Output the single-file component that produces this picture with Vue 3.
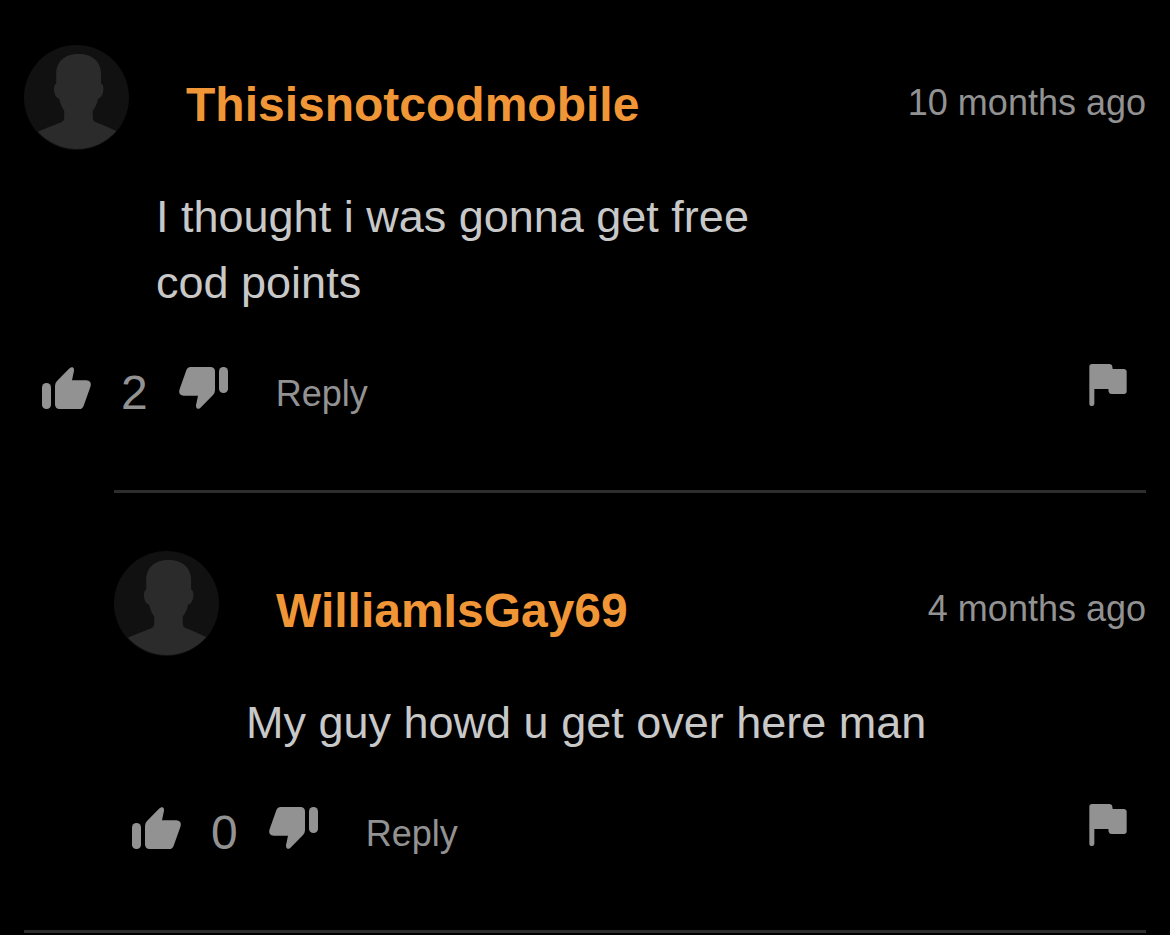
<template>
  <main class="comments">
    <article
      v-for="comment in comments"
      :key="comment.id"
      class="comment"
      :class="{ 'comment-reply': comment.isReply }"
    >
      <header class="comment-head">
        <svg class="avatar" viewBox="0 0 316 316" aria-hidden="true">
          <circle cx="158" cy="158" r="158" fill="#111111" />
          <path
            fill="#2b2b2b"
            d="M42 261 C67 249 98 239 116 230 Q121 227 121 220 V197 C113 187 109 176 106 162 C96 159 90 147 90 132 Q90 120 97 116 V88 C97 48 124 27 164 27 C204 27 232 48 232 88 V116 Q240 120 239 132 C239 147 233 159 223 162 C220 176 216 187 207 197 V220 Q207 227 212 230 C232 239 260 249 278 259 A158 158 0 0 1 42 261 Z"
          />
        </svg>
        <h2 class="author">{{ comment.author }}</h2>
        <time class="date">{{ comment.date }}</time>
      </header>
      <p class="text">{{ comment.text }}</p>
      <div class="actions">
        <button class="vote" type="button" aria-label="Like">
          <svg viewBox="0 0 147 126">
            <rect x="0" y="48" width="27" height="78" rx="13" />
            <path
              d="M39 56 Q39 48 45 42 L81 5 Q86 -1 92 1 Q97 4 96 11 L90 40 H133 Q151 42 145 60 L125 116 Q121 126 112 126 H53 Q39 126 39 112 Z"
            />
          </svg>
        </button>
        <span class="count">{{ comment.votes }}</span>
        <button class="vote" type="button" aria-label="Dislike">
          <svg viewBox="0 0 147 126">
            <rect x="120" y="0" width="27" height="78" rx="13" />
            <path
              d="M108 70 Q108 78 102 84 L66 121 Q61 127 55 125 Q50 122 51 115 L57 86 H14 Q-4 84 2 66 L22 10 Q26 0 35 0 H94 Q108 0 108 14 Z"
            />
          </svg>
        </button>
        <button class="reply" type="button">Reply</button>
        <button class="flag" type="button" aria-label="Report">
          <svg viewBox="0 0 112 126">
            <path
              d="M8 0 H60 Q68 0 69 8 L70 15 H103 Q112 15 112 24 V82 Q112 90 104 90 H67 Q59 90 58 83 L57 75 H15 V119 Q15 126 8 126 Q0 126 0 119 V8 Q0 0 8 0 Z"
            />
          </svg>
        </button>
      </div>
    </article>
  </main>
</template>

<script setup>
import { ref } from "vue";

const comments = ref([
  {
    id: 1,
    author: "Thisisnotcodmobile",
    date: "10 months ago",
    text: "I thought i was gonna get free\ncod points",
    votes: 2,
    isReply: false,
  },
  {
    id: 2,
    author: "WilliamIsGay69",
    date: "4 months ago",
    text: "My guy howd u get over here man",
    votes: 0,
    isReply: true,
  },
]);
</script>

<style>
body {
  margin: 0;
  background: #000000;
}
</style>

<style scoped>
.comments {
  padding: 45px 24px 0;
  font-family: "Liberation Sans", Arial, sans-serif;
  color: #929293;
}

.comments::after {
  content: "";
  display: block;
  height: 3px;
  background: #2d2d2d;
}

.comment {
  padding-bottom: 72px;
}

.comment-reply {
  margin-left: 90px;
  padding-top: 58px;
  border-top: 3px solid #2d2d2d;
}

.comment-head {
  display: flex;
  align-items: flex-start;
  height: 105px;
}

.avatar {
  flex: none;
  width: 105px;
  height: 105px;
}

.author {
  margin: 33px 0 0 57px;
  font-size: 48px;
  line-height: 54px;
  font-weight: bold;
  color: #f09637;
}

.date {
  margin: 37px 0 0 auto;
  font-size: 36px;
  line-height: 42px;
}

.text {
  margin: 34px 0 48px 132px;
  font-size: 45px;
  line-height: 66px;
  color: #c8c8c8;
  white-space: pre-line;
}

.actions {
  display: flex;
  align-items: flex-start;
  height: 54px;
  padding: 0 19px 0 18px;
}

button {
  padding: 0;
  border: 0;
  background: none;
  font-family: inherit;
  color: inherit;
  cursor: pointer;
}

svg {
  display: block;
  fill: currentColor;
}

.vote {
  margin-top: 3px;
}

.vote svg {
  width: 49px;
  height: 42px;
}

.count {
  margin: 2px 31px 0 30px;
  font-size: 48px;
  line-height: 54px;
}

.reply {
  margin: 9px 0 0 48px;
  font-size: 36px;
  line-height: 42px;
}

.flag {
  margin-left: auto;
}

.flag svg {
  width: 38px;
  height: 42px;
}
</style>
